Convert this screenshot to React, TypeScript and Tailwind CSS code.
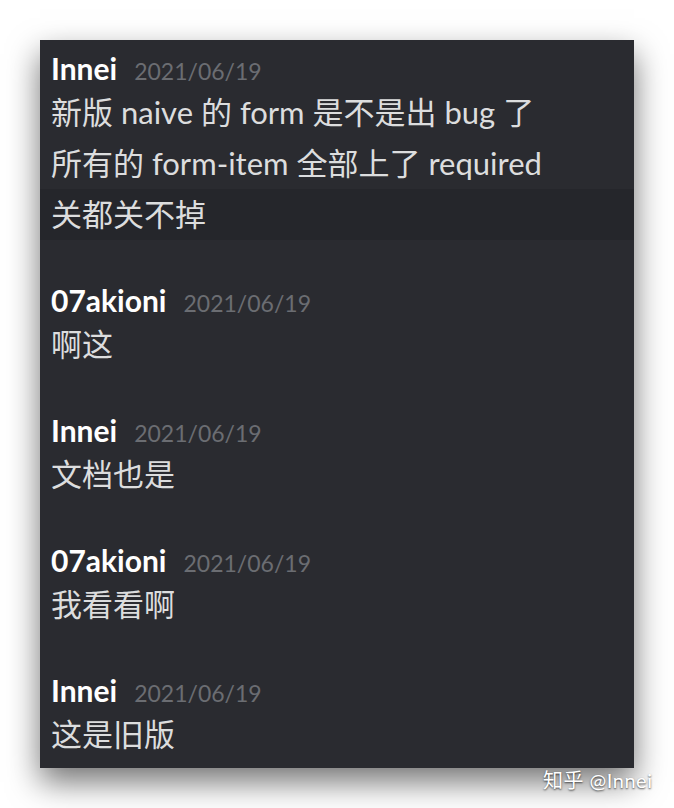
import React from "react";

type Group = { user: string; date: string; lines: string[]; hover?: number };

const groups: Group[] = [
  {
    user: "Innei",
    date: "2021/06/19",
    lines: ["新版 naive 的 form 是不是出 bug 了", "所有的 form-item 全部上了 required", "关都关不掉"],
    hover: 2,
  },
  { user: "07akioni", date: "2021/06/19", lines: ["啊这"] },
  { user: "Innei", date: "2021/06/19", lines: ["文档也是"] },
  { user: "07akioni", date: "2021/06/19", lines: ["我看看啊"] },
  { user: "Innei", date: "2021/06/19", lines: ["这是旧版"] },
];

const font = { fontFamily: '"Lato", "Noto Sans CJK SC", sans-serif' };

function MessageGroup({ group }: { group: Group }) {
  return (
    <div className="flex flex-col">
      <div className="flex h-[37px] items-baseline gap-[17px] px-[11px] leading-[37px]">
        <span className="text-[30px] font-bold text-white">{group.user}</span>
        <span className="text-[23px] text-[#6b6d72]">{group.date}</span>
      </div>
      {group.lines.map((line, i) => (
        <div
          key={i}
          className={`h-[51px] px-[11px] text-[31px] leading-[51px] text-[#dcddde] ${
            group.hover === i ? "bg-[#25262b]" : ""
          }`}
        >
          {line}
        </div>
      ))}
    </div>
  );
}

export default function App() {
  return (
    <div className="relative h-[808px] w-[674px] overflow-hidden bg-white" style={font}>
      <div className="ml-[40px] mt-[40px] flex h-[728px] w-[594px] flex-col gap-[42px] bg-[#2a2b30] pt-[10px] shadow-[0_14px_30px_rgba(0,0,0,0.55)]">
        {groups.map((g, i) => (
          <MessageGroup key={i} group={g} />
        ))}
      </div>

      {/* watermark */}
      <div className="absolute left-[543px] top-[767px] text-[20px] leading-[26px] tracking-[0.5px] text-white [text-shadow:0_1px_2px_rgba(0,0,0,0.7)]">
        知乎 @Innei
      </div>
    </div>
  );
}
